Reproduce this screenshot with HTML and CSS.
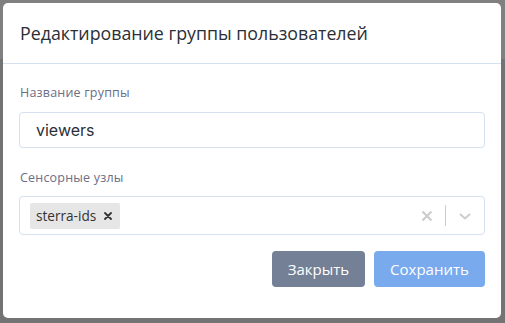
FILE: index.html
```html
<!DOCTYPE html>
<html lang="ru">
<head>
<meta charset="utf-8">
<link rel="stylesheet" href="styles.css">
</head>
<body>
<div class="modal">
  <div class="modal-header">
    <h5 class="modal-title">Редактирование группы пользователей</h5>
  </div>
  <div class="modal-body">
    <label class="field-label">Название группы</label>
    <div class="text-input">viewers</div>
    <label class="field-label second">Сенсорные узлы</label>
    <div class="select">
      <div class="values">
        <span class="chip">sterra-ids
          <svg class="chip-x" width="8" height="8" viewBox="0 0 8 8"><path d="M1 1L7 7M7 1L1 7" stroke="#333" stroke-width="1.8" stroke-linecap="round"/></svg>
        </span>
      </div>
      <div class="indicators">
        <svg class="clear" width="12" height="12" viewBox="0 0 12 12"><path d="M1.5 1.5L10.5 10.5M10.5 1.5L1.5 10.5" stroke="#cccccc" stroke-width="2.2"/></svg>
        <span class="sep"></span>
        <svg class="chev" width="14" height="10" viewBox="0 0 14 10"><path d="M2 3L7 7.5L12 3" stroke="#cccccc" stroke-width="2" fill="none"/></svg>
      </div>
    </div>
    <div class="actions">
      <button class="btn btn-close">Закрыть</button>
      <button class="btn btn-save">Сохранить</button>
    </div>
  </div>
</div>
</body>
</html>
```
FILE: styles.css
```css
html, body {
  margin: 0;
  padding: 0;
}
body {
  width: 505px;
  height: 323px;
  background: linear-gradient(#808080 0, #808080 59px, #737373 59px);
  font-family: "Open Sans", "Liberation Sans", sans-serif;
  overflow: hidden;
}
.modal {
  box-sizing: border-box;
  margin: 3px 0 0 3px;
  width: 498px;
  height: 315px;
  background: #fff;
  border-radius: 5px;
  display: flex;
  flex-direction: column;
}
.modal-header {
  height: 60px;
  border-bottom: 1px solid #d3e1ee;
  display: flex;
  align-items: center;
  padding: 0 17px;
}
.modal-title {
  margin: 0;
  font-size: 17.8px;
  font-weight: 400;
  color: #2b2f36;
  line-height: 27px;
}
.modal-body {
  padding: 20px 16px 0 16px;
  display: flex;
  flex-direction: column;
}
.field-label {
  display: block;
  font-size: 12.5px;
  line-height: 18px;
  color: #6a6e86;
  margin-left: 1px;
  margin-bottom: 10px;
  letter-spacing: 0.2px;
}
.field-label.second {
  margin-top: 21px;
  margin-bottom: 9px;
}
.text-input {
  box-sizing: border-box;
  height: 36px;
  border: 1px solid #d5e1ee;
  border-radius: 4px;
  padding: 0 16px;
  display: flex;
  align-items: center;
  font-family: Inter, "Open Sans", sans-serif;
  font-size: 16px;
  color: #2b2f36;
}
.select {
  box-sizing: border-box;
  height: 39px;
  border: 1px solid #d5e1ee;
  border-radius: 4px;
  display: flex;
  align-items: center;
  justify-content: space-between;
  padding: 0 10px;
}
.chip {
  display: inline-flex;
  align-items: center;
  height: 26px;
  box-sizing: border-box;
  background: #e6e6e6;
  border-radius: 2px;
  padding: 0 8px 0 6px;
  font-size: 13.6px;
  color: #333;
  gap: 8px;
}
.indicators {
  display: flex;
  align-items: center;
  margin-right: 2px;
}
.clear {
  margin-right: 12px;
}
.sep {
  width: 1px;
  height: 21px;
  background: #cccccc;
  margin-right: 12px;
}
.actions {
  display: flex;
  justify-content: flex-end;
  gap: 9px;
  margin-top: 16px;
}
.btn {
  height: 36px;
  border: none;
  border-radius: 4px;
  color: #fff;
  font-family: "Open Sans", "Liberation Sans", sans-serif;
  font-size: 15px;
  padding: 0 12px;
}
.btn-close {
  background: #738096;
  width: 93px;
}
.btn-save {
  background: #79aaee;
  width: 111px;
}
```
